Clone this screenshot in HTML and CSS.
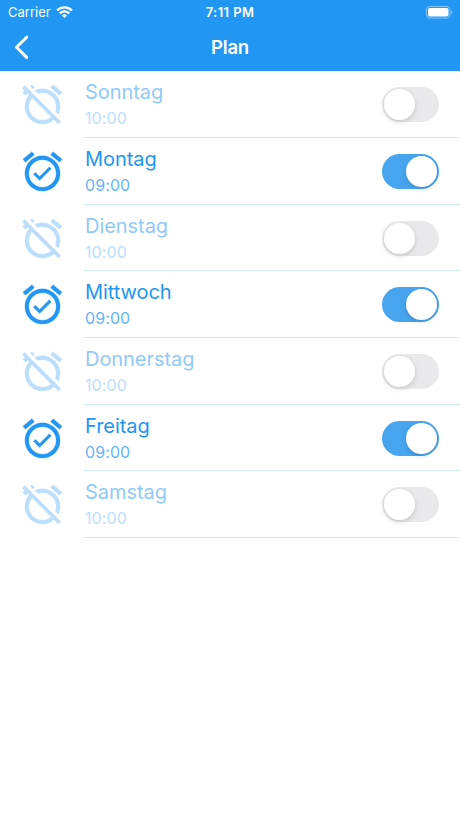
FILE: index.html
```html
<!DOCTYPE html>
<html lang="de">
<head>
	<meta charset="UTF-8">
	<title>Plan</title>
	<link rel="stylesheet" href="styles.css">
</head>
<body>
<svg class="sprite" width="0" height="0">
	<symbol id="alarm-on" viewBox="0 0 24 24">
		<path d="M22 5.72l-4.6-3.86-1.29 1.53 4.6 3.86L22 5.72zM7.88 3.39L6.6 1.86 2 5.71l1.29 1.53 4.59-3.85zM12 4c-4.97 0-9 4.03-9 9s4.02 9 9 9a9 9 0 0 0 0-18zm0 16c-3.87 0-7-3.13-7-7s3.13-7 7-7 7 3.13 7 7-3.13 7-7 7zm-1.46-5.47L8.41 12.4l-1.06 1.06 3.18 3.18 6-6-1.06-1.06-4.93 4.95z"/>
	</symbol>
	<symbol id="alarm-off" viewBox="0 0 24 24">
		<path d="M12 6c3.87 0 7 3.13 7 7 0 .84-.16 1.65-.43 2.4l1.52 1.52c.58-1.19.91-2.51.91-3.92a9 9 0 0 0-9-9c-1.41 0-2.73.33-3.92.91L9.6 6.43C10.35 6.16 11.16 6 12 6zm10-.28l-4.6-3.86-1.29 1.53 4.6 3.86L22 5.72zM2.92 2.29L1.65 3.57 2.98 4.9l-1.11.93 1.42 1.42 1.11-.94.8.8A8.964 8.964 0 0 0 3 13c0 4.97 4.02 9 9 9 2.25 0 4.31-.83 5.89-2.2l2.2 2.2 1.27-1.27L3.89 3.27l-.97-.98zm13.55 16.1C15.26 19.39 13.7 20 12 20c-3.87 0-7-3.13-7-7 0-1.7.61-3.26 1.61-4.47l9.86 9.86zM8.02 3.28L6.6 1.86l-.86.71 1.42 1.42.86-.71z"/>
	</symbol>
</svg>
<header class="header">
	<div class="status-bar">
		<div class="carrier">
			<span>Carrier</span>
			<svg class="wifi" viewBox="0 0 17 12">
				<path d="M1 4.5a10.6 10.6 0 0 1 15 0M3.7 7.4a6.8 6.8 0 0 1 9.6 0" fill="none" stroke="#fff" stroke-width="2.3"/>
				<path d="M8.5 12l-2.6-2.5a3.8 3.8 0 0 1 5.2 0z" fill="#fff"/>
			</svg>
		</div>
		<div class="clock">7:11 PM</div>
		<div class="power">
			<svg class="battery" viewBox="0 0 28 13">
				<rect x=".5" y=".5" width="23.5" height="11.5" rx="3" fill="none" stroke="#fff" stroke-opacity=".45"/>
				<rect x="2" y="2" width="20.5" height="8.5" rx="1.8" fill="#fff"/>
				<path d="M25.3 4.3v4c1.6-.6 1.6-3.4 0-4z" fill="#fff" fill-opacity=".5"/>
			</svg>
		</div>
	</div>
	<div class="nav-bar">
		<a class="back" href="#">
			<svg class="chevron" viewBox="0 0 15 25"><path d="M12.7 2.2L2.5 12.2l10.2 10.2"/></svg>
		</a>
		<h1 class="title">Plan</h1>
	</div>
</header>
<ul class="days">
	<li class="day">
		<svg class="alarm"><use href="#alarm-off"/></svg>
		<div class="day-body">
			<div><div class="name">Sonntag</div><div class="time">10:00</div></div>
			<span class="switch"></span>
		</div>
	</li>
	<li class="day active">
		<svg class="alarm"><use href="#alarm-on"/></svg>
		<div class="day-body">
			<div><div class="name">Montag</div><div class="time">09:00</div></div>
			<span class="switch"></span>
		</div>
	</li>
	<li class="day">
		<svg class="alarm"><use href="#alarm-off"/></svg>
		<div class="day-body">
			<div><div class="name">Dienstag</div><div class="time">10:00</div></div>
			<span class="switch"></span>
		</div>
	</li>
	<li class="day active">
		<svg class="alarm"><use href="#alarm-on"/></svg>
		<div class="day-body">
			<div><div class="name">Mittwoch</div><div class="time">09:00</div></div>
			<span class="switch"></span>
		</div>
	</li>
	<li class="day">
		<svg class="alarm"><use href="#alarm-off"/></svg>
		<div class="day-body">
			<div><div class="name">Donnerstag</div><div class="time">10:00</div></div>
			<span class="switch"></span>
		</div>
	</li>
	<li class="day active">
		<svg class="alarm"><use href="#alarm-on"/></svg>
		<div class="day-body">
			<div><div class="name">Freitag</div><div class="time">09:00</div></div>
			<span class="switch"></span>
		</div>
	</li>
	<li class="day">
		<svg class="alarm"><use href="#alarm-off"/></svg>
		<div class="day-body">
			<div><div class="name">Samstag</div><div class="time">10:00</div></div>
			<span class="switch"></span>
		</div>
	</li>
</ul>
</body>
</html>
```
FILE: styles.css
```css
* {
	box-sizing: border-box
}
body {
	margin: 0;
	background-color: #fff;
	font-family: Inter, "Liberation Sans", sans-serif
}
.sprite {
	display: block
}
.header {
	height: 71px;
	background-color: #2196f3;
	color: #fff
}
.status-bar {
	display: grid;
	grid-template-columns: 1fr auto 1fr;
	align-items: center;
	height: 24px;
	padding: 0 6px 0 8px;
	font-size: 13px
}
.carrier {
	display: flex;
	align-items: center;
	gap: 5px
}
.wifi {
	width: 17px;
	height: 12px
}
.clock {
	margin-right: 2px;
	font-weight: 600;
	letter-spacing: .4px
}
.power {
	display: flex;
	justify-content: flex-end
}
.battery {
	width: 28px;
	height: 13px
}
.nav-bar {
	display: grid;
	grid-template-columns: 1fr auto 1fr;
	align-items: center;
	height: 46px;
	padding: 0 14px
}
.back {
	display: flex
}
.chevron {
	width: 15px;
	height: 25px;
	fill: none;
	stroke: #fff;
	stroke-width: 3;
	stroke-linecap: round;
	stroke-linejoin: round
}
.title {
	margin: 0;
	font-size: 18.5px;
	font-weight: 600;
	letter-spacing: -.2px
}
.days {
	margin: 0;
	padding: .4px 0 0;
	list-style: none
}
.day {
	display: flex;
	align-items: center;
	height: 66.67px;
	padding-left: 19px;
	color: #2196f3
}
.alarm {
	flex: none;
	width: 47px;
	height: 47px;
	margin-right: 18px;
	fill: #bbdefb;
	stroke: #bbdefb;
	stroke-width: .15
}
.active .alarm {
	fill: #2196f3;
	stroke: #2196f3
}
.day-body {
	display: flex;
	flex: 1;
	align-items: center;
	justify-content: space-between;
	height: 100%;
	padding: 0 21px 0 1px;
	border-bottom: 1px solid #cfe7fb
}
.name {
	color: #90caf9;
	font-size: 20px;
	line-height: 28px;
	letter-spacing: -.05px
}
.time {
	color: #bbdefb;
	font-size: 16px;
	line-height: 24px;
	letter-spacing: .1px
}
.active .name {
	color: #2196f3
}
.active .time {
	color: #64b5f6
}
.switch {
	width: 57px;
	height: 35px;
	margin-top: 1px;
	padding: 2px;
	border-radius: 18px;
	background-color: #e9e9eb
}
.switch:after {
	content: "";
	display: block;
	width: 31px;
	height: 31px;
	border-radius: 50%;
	background-color: #fff;
	box-shadow: 0 2px 5px rgba(0, 0, 0, .15)
}
.active .switch {
	background-color: #47a5f0
}
.active .switch:after {
	margin-left: auto
}
```
